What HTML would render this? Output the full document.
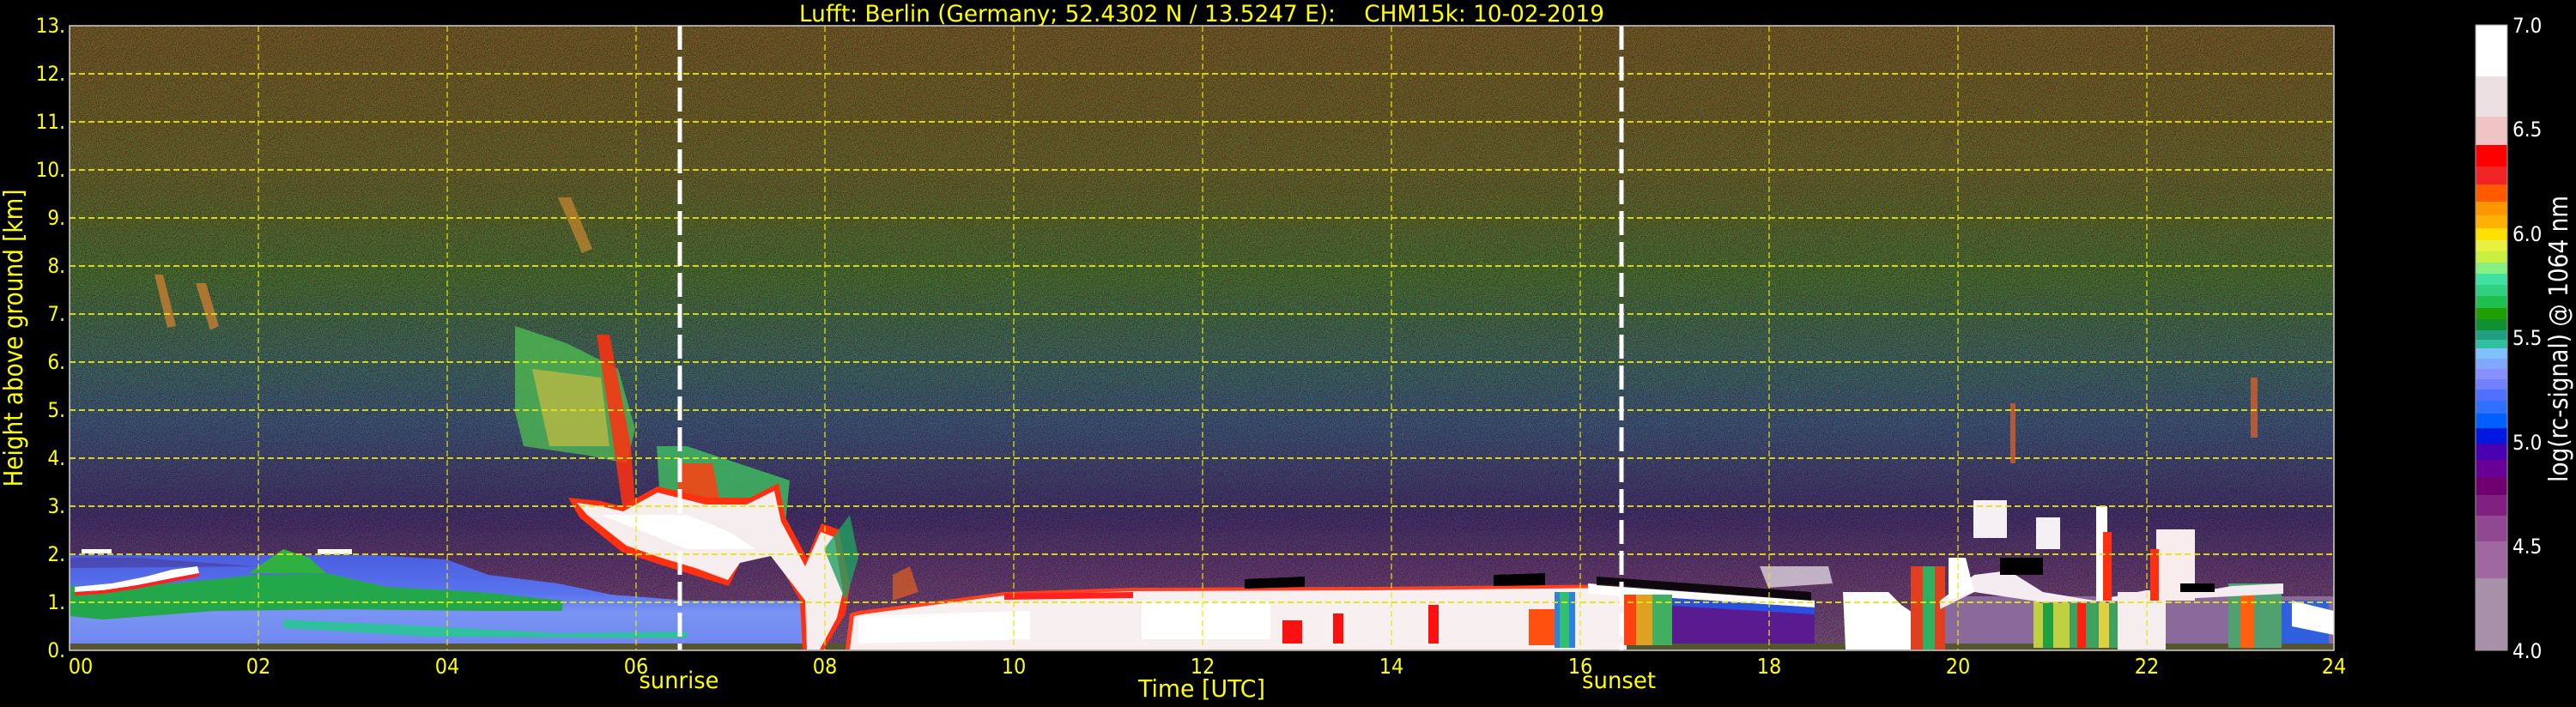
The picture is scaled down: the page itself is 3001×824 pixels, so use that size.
<!DOCTYPE html>
<html><head><meta charset="utf-8">
<style>
html,body{margin:0;padding:0;background:#000;width:3001px;height:824px;overflow:hidden}
svg{display:block}
text{font-family:"DejaVu Sans Condensed","DejaVu Sans","Liberation Sans",sans-serif;fill:#ffff00}
</style></head><body>
<svg width="3001" height="824" viewBox="0 0 3001 824" xmlns="http://www.w3.org/2000/svg">
<defs>
<linearGradient id="bg" x1="0" y1="30" x2="0" y2="758" gradientUnits="userSpaceOnUse">
<stop offset="0" stop-color="#66502f"/>
<stop offset="0.23" stop-color="#5c5636"/>
<stop offset="0.40" stop-color="#42603e"/>
<stop offset="0.54" stop-color="#3a5870"/>
<stop offset="0.64" stop-color="#3a4a8c"/>
<stop offset="0.78" stop-color="#3c2c7c"/>
<stop offset="0.88" stop-color="#5a3484"/>
<stop offset="1" stop-color="#6a4890"/>
</linearGradient>
<filter id="spk" x="0" y="0" width="100%" height="100%">
<feTurbulence type="fractalNoise" baseFrequency="0.9" numOctaves="1" seed="3" result="n"/>
<feComponentTransfer in="n" result="d">
<feFuncR type="discrete" tableValues="0 0 1 1"/>
<feFuncG type="discrete" tableValues="0 1 0 1"/>
<feFuncB type="discrete" tableValues="1 0 0 1"/>
<feFuncA type="linear" slope="0" intercept="1"/>
</feComponentTransfer>
<feComposite in="SourceGraphic" in2="d" operator="arithmetic" k1="1.0" k2="0.5" k3="0" k4="0"/>
</filter>
<linearGradient id="blue" x1="0" y1="646" x2="0" y2="750" gradientUnits="userSpaceOnUse">
<stop offset="0" stop-color="#4a5ee0"/>
<stop offset="0.45" stop-color="#5a74ee"/>
<stop offset="0.65" stop-color="#7a94f4"/>
<stop offset="1" stop-color="#7088f0"/>
</linearGradient>
</defs>

<text x="1400" y="25" font-size="27" text-anchor="middle" textLength="938" lengthAdjust="spacingAndGlyphs">Lufft: Berlin (Germany; 52.4302 N / 13.5247 E):&#160;&#160;&#160;&#160;CHM15k: 10-02-2019</text>

<rect x="81" y="30" width="2638" height="728" fill="url(#bg)" filter="url(#spk)"/>

<path d="M81 647 L437 647 L520 652 L569 670 L650 680 L712 693 L800 700 L935 700 L935 750 L81 750 Z" fill="url(#blue)"/>
<path d="M81 650 L160 650 L230 655 L300 660 L81 662 Z" fill="#4a3a9a" opacity="0.6"/>
<path d="M81 683 L200 680 L300 670 L380 668 L450 684 L560 690 L655 700 L655 712 L560 712 L400 710 L250 712 L120 722 L81 718 Z" fill="#22a84a"/>
<path d="M290 668 L330 640 L360 650 L380 668 Z" fill="#30b040"/>
<path d="M330 722 L500 730 L650 738 L800 736 L800 744 L500 742 L330 732 Z" fill="#30c0a0"/>
<path d="M87 684 L130 680 L170 672 L200 664 L230 660 L232 668 L200 674 L160 682 L120 688 L87 690 Z" fill="#ffffff"/>
<path d="M87 690 L120 688 L160 682 L200 674 L232 668 L232 672 L200 678 L160 686 L120 692 L87 694 Z" fill="#ff2020"/>
<path d="M95 640 L130 640 L130 645 L95 645 Z M370 640 L410 640 L410 646 L370 646 Z" fill="#ffffff"/>
<rect x="81" y="750" width="2638" height="8" fill="#555530"/>

<path d="M180 320 L190 320 L205 380 L195 382 Z M228 330 L240 330 L255 380 L245 385 Z" fill="#d08030" opacity="0.75"/>
<path d="M600 380 L660 400 L720 430 L740 500 L730 540 L680 530 L610 520 L600 480 Z" fill="#50c050" opacity="0.75"/>
<path d="M620 430 L700 440 L710 520 L640 520 Z" fill="#e0c040" opacity="0.6"/>
<path d="M695 390 L710 390 L735 520 L740 590 L725 590 L712 500 Z" fill="#ff3010" opacity="0.85"/>
<path d="M650 230 L665 230 L690 290 L678 295 Z" fill="#e09030" opacity="0.6"/>
<path d="M765 520 L800 520 L860 540 L920 560 L915 610 L770 600 Z" fill="#40c060" opacity="0.8"/>
<path d="M790 540 L830 540 L840 590 L790 600 Z" fill="#ff4010" opacity="0.85"/>
<path d="M662 580 L700 584 L724 590 L766 567 L824 580 L874 580 L907 563 L915 603 L940 650 L957 610 L977 617 L990 683 L985 715 L960 757 L935 757 L932 700 L898 640 L865 650 L849 683 L807 670 L766 657 L724 643 L675 603 Z" fill="#ff3010"/>
<path d="M672 586 L700 590 L726 596 L766 574 L822 588 L870 588 L902 572 L910 608 L938 660 L956 620 L972 626 L982 690 L975 720 L955 757 L940 757 L938 700 L898 648 L862 656 L848 676 L810 662 L770 650 L730 636 L684 600 Z" fill="#f6eeee"/>
<path d="M700 600 L800 600 L850 620 L880 640 L800 640 Z" fill="#ffffff"/>

<path d="M985 757 L990 715 L1000 712 L1080 702 L1170 690 L1320 685 L1600 684 L1895 681 L1895 757 Z" fill="#ff4020"/>
<path d="M990 757 L995 718 L1005 716 L1080 706 L1170 694 L1320 689 L1600 688 L1895 685 L1895 757 Z" fill="#f8f0f0"/>
<path d="M1000 718 L1200 712 L1200 745 L1000 750 Z M1330 700 L1480 700 L1480 745 L1330 745 Z" fill="#ffffff"/>
<path d="M1170 692 L1320 690 L1320 697 L1170 699 Z" fill="#ff2020"/>
<path d="M1494 723 L1517 723 L1517 750 L1494 750 Z M1553 715 L1565 715 L1565 750 L1553 750 Z M1664 705 L1676 705 L1676 750 L1664 750 Z" fill="#ff1010"/>
<path d="M1781 710 L1811 710 L1811 752 L1781 752 Z" fill="#ff5010"/>
<path d="M1811 690 L1835 690 L1835 755 L1811 755 Z" fill="#3080e0"/>
<path d="M1817 690 L1828 690 L1828 755 L1817 755 Z" fill="#30c070"/>
<path d="M1450 675 L1520 672 L1520 684 L1450 686 Z M1740 670 L1800 668 L1800 682 L1740 683 Z" fill="#000"/>
<path d="M960 640 L990 600 L1000 650 L985 700 Z" fill="#20a060" opacity="0.8"/>
<path d="M1040 670 L1060 660 L1070 690 L1040 700 Z" fill="#e06020" opacity="0.7"/>

<path d="M1850 680 L2114 700 L2114 710 L1850 692 Z" fill="#ffffff"/>
<path d="M1860 672 L2110 690 L2110 700 L1860 682 Z" fill="#000" opacity="0.85"/>
<rect x="1892" y="693" width="56" height="59" fill="#e0a020"/>
<rect x="1892" y="693" width="14" height="59" fill="#ff4010"/>
<rect x="1925" y="693" width="23" height="59" fill="#40b060"/>
<path d="M1948 697 L2114 708 L2114 750 L1948 750 Z" fill="#5a1a90"/>
<path d="M1948 697 L2114 708 L2114 716 L1948 706 Z" fill="#2a50e0"/>
<path d="M2147 690 L2200 690 L2215 705 L2237 720 L2245 757 L2150 757 Z" fill="#ffffff"/>
<path d="M2050 660 L2130 660 L2135 680 L2060 685 Z" fill="#f0e8f0" opacity="0.7"/>

<path d="M2237 695 L2719 695 L2719 750 L2237 750 Z" fill="#8a6a9a"/>
<rect x="2226" y="660" width="40" height="97" fill="#e04020"/>
<rect x="2240" y="660" width="14" height="97" fill="#30b060"/>
<rect x="2369" y="703" width="42" height="52" fill="#c0d040"/>
<rect x="2380" y="703" width="12" height="52" fill="#20a040"/>
<rect x="2411" y="703" width="56" height="52" fill="#40a060"/>
<rect x="2420" y="703" width="10" height="52" fill="#ff2010"/>
<rect x="2445" y="703" width="12" height="52" fill="#e0d040"/>
<rect x="2467" y="690" width="56" height="67" fill="#f6eeee"/>
<rect x="2596" y="680" width="62" height="75" fill="#50a070"/>
<rect x="2610" y="690" width="16" height="65" fill="#ff6010"/>
<rect x="2658" y="700" width="55" height="50" fill="#3060e0"/>
<path d="M2670 700 L2719 712 L2719 740 L2670 730 Z" fill="#ffffff"/>
<path d="M2260 700 L2300 670 L2340 665 L2380 690 L2440 700 L2500 688 L2560 690 L2600 683 L2660 680 L2660 692 L2600 695 L2500 700 L2380 702 L2300 690 L2260 710 Z" fill="#f4ecf0"/>
<path d="M2270 650 L2290 650 L2300 690 L2270 700 Z" fill="#ffffff"/>
<path d="M2299 583 L2338 583 L2338 627 L2299 627 Z M2372 603 L2400 603 L2400 640 L2372 640 Z" fill="#f4f0f4"/>
<path d="M2442 590 L2455 590 L2455 700 L2442 700 Z" fill="#ffffff"/>
<path d="M2512 617 L2557 617 L2557 700 L2512 700 Z" fill="#f8ecec"/>
<path d="M2505 640 L2515 640 L2515 700 L2505 700 Z M2450 620 L2460 620 L2460 700 L2450 700 Z" fill="#ff3010"/>
<path d="M2330 650 L2380 650 L2380 670 L2330 670 Z M2540 690 L2580 690 L2580 680 L2540 680 Z" fill="#000"/>
<path d="M2342 470 L2348 470 L2348 540 L2342 540 Z M2622 440 L2630 440 L2630 510 L2622 510 Z" fill="#d06030" opacity="0.8"/>

<g stroke="#e8e800" stroke-width="2" stroke-dasharray="7 4" opacity="0.9">
<line x1="81" y1="702" x2="2719" y2="702"/>
<line x1="81" y1="646" x2="2719" y2="646"/>
<line x1="81" y1="590" x2="2719" y2="590"/>
<line x1="81" y1="534" x2="2719" y2="534"/>
<line x1="81" y1="478" x2="2719" y2="478"/>
<line x1="81" y1="422" x2="2719" y2="422"/>
<line x1="81" y1="366" x2="2719" y2="366"/>
<line x1="81" y1="310" x2="2719" y2="310"/>
<line x1="81" y1="254" x2="2719" y2="254"/>
<line x1="81" y1="198" x2="2719" y2="198"/>
<line x1="81" y1="142" x2="2719" y2="142"/>
<line x1="81" y1="86" x2="2719" y2="86"/>
</g>
<g stroke="#e8e800" stroke-width="1.5" stroke-dasharray="7 4" opacity="0.8">
<line x1="301" y1="30" x2="301" y2="758"/>
<line x1="521" y1="30" x2="521" y2="758"/>
<line x1="741" y1="30" x2="741" y2="758"/>
<line x1="961" y1="30" x2="961" y2="758"/>
<line x1="1181" y1="30" x2="1181" y2="758"/>
<line x1="1401" y1="30" x2="1401" y2="758"/>
<line x1="1621" y1="30" x2="1621" y2="758"/>
<line x1="1841" y1="30" x2="1841" y2="758"/>
<line x1="2061" y1="30" x2="2061" y2="758"/>
<line x1="2281" y1="30" x2="2281" y2="758"/>
<line x1="2501" y1="30" x2="2501" y2="758"/>
</g>
<g stroke="#ffffff" stroke-width="5" stroke-dasharray="28 8">
<line x1="792" y1="30" x2="792" y2="758"/>
<line x1="1889" y1="30" x2="1889" y2="758"/>
</g>
<rect x="81" y="30" width="2638" height="728" fill="none" stroke="#cfcfcf" stroke-width="1.5"/>

<g font-size="24" text-anchor="end">
<text x="76" y="38">13.</text>
<text x="76" y="94">12.</text>
<text x="76" y="150">11.</text>
<text x="76" y="206">10.</text>
<text x="76" y="262">9.</text>
<text x="76" y="318">8.</text>
<text x="76" y="374">7.</text>
<text x="76" y="430">6.</text>
<text x="76" y="486">5.</text>
<text x="76" y="542">4.</text>
<text x="76" y="598">3.</text>
<text x="76" y="654">2.</text>
<text x="76" y="710">1.</text>
<text x="76" y="766">0.</text>
</g>
<text transform="translate(26 394) rotate(-90)" font-size="30" text-anchor="middle" textLength="347" lengthAdjust="spacingAndGlyphs">Height above ground [km]</text>

<g font-size="25" text-anchor="middle">
<text x="94" y="785">00</text>
<text x="301" y="785">02</text>
<text x="521" y="785">04</text>
<text x="741" y="785">06</text>
<text x="961" y="785">08</text>
<text x="1181" y="785">10</text>
<text x="1401" y="785">12</text>
<text x="1621" y="785">14</text>
<text x="1841" y="785">16</text>
<text x="2061" y="785">18</text>
<text x="2281" y="785">20</text>
<text x="2501" y="785">22</text>
<text x="2719" y="785">24</text>
</g>
<text x="791" y="802" font-size="27" text-anchor="middle" textLength="93" lengthAdjust="spacingAndGlyphs">sunrise</text>
<text x="1886" y="802" font-size="27" text-anchor="middle" textLength="86" lengthAdjust="spacingAndGlyphs">sunset</text>
<text x="1400" y="812" font-size="28" text-anchor="middle" textLength="148" lengthAdjust="spacingAndGlyphs">Time [UTC]</text>

<g>
<rect x="2884" y="29" width="37" height="60" fill="#ffffff"/>
<rect x="2884" y="89" width="37" height="47" fill="#ece0e2"/>
<rect x="2884" y="136" width="37" height="33" fill="#f0c4c4"/>
<rect x="2884" y="169" width="37" height="25" fill="#ff0000"/>
<rect x="2884" y="194" width="37" height="21" fill="#f02424"/>
<rect x="2884" y="215" width="37" height="20" fill="#ff5a00"/>
<rect x="2884" y="235" width="37" height="16" fill="#ff9600"/>
<rect x="2884" y="251" width="37" height="15" fill="#ffb000"/>
<rect x="2884" y="266" width="37" height="14" fill="#ffe000"/>
<rect x="2884" y="280" width="37" height="13" fill="#e8f040"/>
<rect x="2884" y="293" width="37" height="13" fill="#c8f040"/>
<rect x="2884" y="306" width="37" height="13" fill="#88f080"/>
<rect x="2884" y="319" width="37" height="13" fill="#40e0a0"/>
<rect x="2884" y="332" width="37" height="13" fill="#30d080"/>
<rect x="2884" y="345" width="37" height="14" fill="#20c050"/>
<rect x="2884" y="359" width="37" height="13" fill="#20a000"/>
<rect x="2884" y="372" width="37" height="13" fill="#109030"/>
<rect x="2884" y="385" width="37" height="11" fill="#20a080"/>
<rect x="2884" y="396" width="37" height="10" fill="#30c0a0"/>
<rect x="2884" y="406" width="37" height="12" fill="#80c0ff"/>
<rect x="2884" y="418" width="37" height="12" fill="#80a8ff"/>
<rect x="2884" y="430" width="37" height="12" fill="#8890ff"/>
<rect x="2884" y="442" width="37" height="12" fill="#7080ff"/>
<rect x="2884" y="454" width="37" height="13" fill="#5070ff"/>
<rect x="2884" y="467" width="37" height="15" fill="#3070ff"/>
<rect x="2884" y="482" width="37" height="17" fill="#0060ff"/>
<rect x="2884" y="499" width="37" height="18" fill="#0018e0"/>
<rect x="2884" y="517" width="37" height="19" fill="#4800b0"/>
<rect x="2884" y="536" width="37" height="20" fill="#680098"/>
<rect x="2884" y="556" width="37" height="21" fill="#700070"/>
<rect x="2884" y="577" width="37" height="24" fill="#802080"/>
<rect x="2884" y="601" width="37" height="30" fill="#904890"/>
<rect x="2884" y="631" width="37" height="43" fill="#a068a0"/>
<rect x="2884" y="674" width="37" height="84" fill="#a890a8"/>
<rect x="2884" y="29" width="37" height="729" fill="none" stroke="#9a9a9a" stroke-width="1"/>
</g>
<g font-size="24">
<text x="2927" y="38" style="fill:#fff">7.0</text>
<text x="2927" y="159" style="fill:#fff">6.5</text>
<text x="2927" y="281" style="fill:#fff">6.0</text>
<text x="2927" y="402" style="fill:#fff">5.5</text>
<text x="2927" y="524" style="fill:#fff">5.0</text>
<text x="2927" y="645" style="fill:#fff">4.5</text>
<text x="2927" y="767" style="fill:#fff">4.0</text>
</g>
<text transform="translate(2991 395) rotate(-90)" font-size="30" text-anchor="middle" textLength="334" lengthAdjust="spacingAndGlyphs" style="fill:#fff">log(rc-signal) @ 1064 nm</text>
</svg>
</body></html>
